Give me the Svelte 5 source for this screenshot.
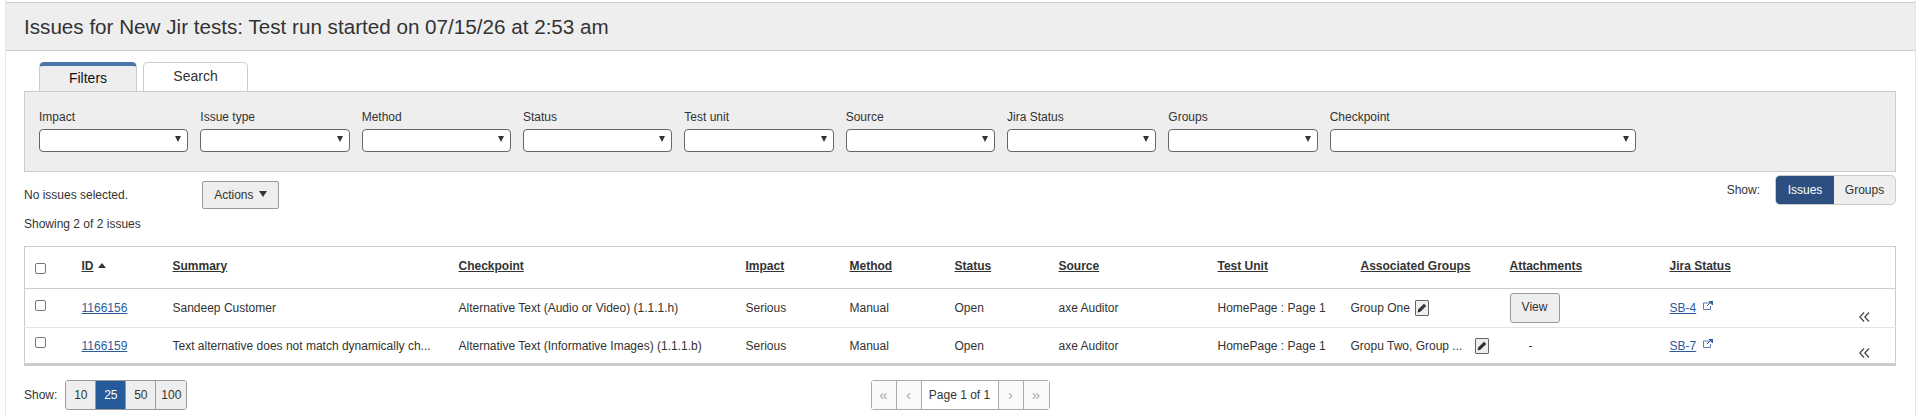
<script>
  const filters = ["Impact", "Issue type", "Method", "Status", "Test unit", "Source", "Jira Status", "Groups", "Checkpoint"];
  const columns = ["ID", "Summary", "Checkpoint", "Impact", "Method", "Status", "Source", "Test Unit", "Associated Groups", "Attachments", "Jira Status"];
  const widths = [47, 91, 286, 287, 104, 105, 104, 159, 133, 159, 160, 189];
  const issues = [
    {
      id: "1166156",
      summary: "Sandeep Customer",
      checkpoint: "Alternative Text (Audio or Video) (1.1.1.h)",
      groups: "Group One",
      wide: false,
      view: true,
      jira: "SB-4"
    },
    {
      id: "1166159",
      summary: "Text alternative does not match dynamically ch...",
      checkpoint: "Alternative Text (Informative Images) (1.1.1.b)",
      groups: "Gropu Two, Group ...",
      wide: true,
      view: false,
      jira: "SB-7"
    }
  ];
  const sizes = ["10", "25", "50", "100"];
</script>

<div class="page">
  <h1>Issues for New Jir tests: Test run started on 07/15/26 at 2:53 am</h1>

  <div class="content">
    <div class="tabs">
      <button class="tab active">Filters</button>
      <button class="tab">Search</button>
    </div>

    <div class="filters">
      {#each filters as name}
        <div class="field" class:long={name === "Checkpoint"}>
          <span class="label">{name}</span>
          <div class="select"><span class="arrow"></span></div>
        </div>
      {/each}
    </div>

    <div class="toolbar">
      <div class="selection">
        <span class="none">No issues selected.</span>
        <button class="actions">Actions <span class="arrow"></span></button>
      </div>
      <div class="show">
        <span>Show:</span>
        <div class="toggle">
          <button class="on">Issues</button>
          <button>Groups</button>
        </div>
      </div>
    </div>

    <p class="count">Showing 2 of 2 issues</p>

    <table>
      <colgroup>
        {#each widths as w}
          <col style="width: {w}px" />
        {/each}
        <col />
      </colgroup>
      <thead>
        <tr>
          <th><span class="box head"></span></th>
          {#each columns as col}
            <th class:assoc={col === "Associated Groups"}>
              <u>{col}</u>{#if col === "ID"}<span class="sort"></span>{/if}
            </th>
          {/each}
          <th></th>
        </tr>
      </thead>
      <tbody>
        {#each issues as issue}
          <tr>
            <td><span class="box"></span></td>
            <td><a href="#top">{issue.id}</a></td>
            <td>{issue.summary}</td>
            <td>{issue.checkpoint}</td>
            <td>Serious</td>
            <td>Manual</td>
            <td>Open</td>
            <td>axe Auditor</td>
            <td>HomePage : Page 1</td>
            <td>
              <div class="groups" class:wide={issue.wide}>
                <span class="names">{issue.groups}</span>
                <button class="edit" aria-label="Edit groups">
                  <svg width="10" height="10" viewBox="0 0 10 10">
                    <path d="M7 .8 9.2 3 3.4 8.8.6 9.4 1.2 6.6Z" fill="#333" />
                  </svg>
                </button>
              </div>
            </td>
            <td class="attach">
              {#if issue.view}
                <button class="view">View</button>
              {:else}
                <span class="dash">-</span>
              {/if}
            </td>
            <td>
              <a href="#top">{issue.jira}</a>
              <svg class="ext" width="10" height="9" viewBox="0 0 10 9">
                <path d="M6.5 2H.5v6.500h7V5" fill="none" stroke="#5b7fae" />
                <path d="M4 5 7.500 1.500M6 .3h3.700V4Z" fill="#2a5c9e" stroke="#2a5c9e" />
              </svg>
            </td>
            <td class="more">
              <svg width="11" height="10" viewBox="0 0 11 10">
                <path d="M5 .5.800 5 5 9.500M10 .5 5.800 5 10 9.500" fill="none" stroke="#444" stroke-width="1.200" />
              </svg>
            </td>
          </tr>
        {/each}
      </tbody>
    </table>

    <div class="footer">
      <div class="sizes">
        <span>Show:</span>
        <div class="size-group">
          {#each sizes as size}
            <button class:on={size === "25"}>{size}</button>
          {/each}
        </div>
      </div>

      <div class="pager">
        <button aria-label="First page">«</button>
        <button aria-label="Previous page">‹</button>
        <span>Page 1 of 1</span>
        <button aria-label="Next page">›</button>
        <button aria-label="Last page">»</button>
      </div>
    </div>
  </div>
</div>

<style>
  :global(body) {
    background: #fff;
    color: #333;
    font-family: "Liberation Sans", Arial, sans-serif;
    font-size: 12px;
  }

  .page {
    box-sizing: border-box;
    height: 417px;
    margin-left: 5px;
    padding-top: 2px;
    border-left: 1px solid #e6e6e6;
    border-right: 1px solid #e6e6e6;
  }

  button {
    font-family: inherit;
    color: inherit;
    cursor: pointer;
  }

  h1 {
    box-sizing: border-box;
    height: 49px;
    margin: 0;
    padding-left: 18px;
    background: #eee;
    border-top: 1px solid #ccc;
    border-bottom: 1px solid #ccc;
    font-size: 20.65px;
    font-weight: normal;
    line-height: 47px;
  }

  .content {
    padding: 11px 19px 0 18px;
  }

  .tabs {
    display: flex;
    gap: 6px;
    height: 29px;
    padding-left: 15px;
  }

  .tab {
    box-sizing: border-box;
    width: 105px;
    height: 29px;
    padding: 0 0 3px;
    background: #fff;
    border: 1px solid #ccc;
    border-bottom: none;
    border-radius: 5px 5px 0 0;
    font-size: 14px;
  }

  .tab.active {
    width: 98px;
    padding: 0 0 2px;
    background: #eee;
    border-top: 4px solid #4a76a8;
    color: #111;
  }

  .filters {
    box-sizing: border-box;
    display: flex;
    gap: 12px;
    height: 81px;
    padding: 17px 14px 0;
    background: #eee;
    border: 1px solid #ccc;
  }

  .field {
    display: flex;
    flex-direction: column;
    width: 149.33px;
  }

  .field.long {
    width: 306px;
  }

  .label {
    height: 20px;
    line-height: 16px;
  }

  .select {
    box-sizing: border-box;
    position: relative;
    height: 23px;
    background: #fff;
    border: 1px solid #666;
    border-radius: 4px;
  }

  .arrow {
    display: inline-block;
    border-left: 3.500px solid transparent;
    border-right: 3.500px solid transparent;
    border-top: 6px solid #333;
  }

  .select .arrow {
    position: absolute;
    top: 6px;
    right: 6px;
  }

  .toolbar {
    display: flex;
    justify-content: space-between;
    align-items: flex-start;
    height: 38px;
    padding-top: 3px;
    box-sizing: border-box;
  }

  .selection {
    display: flex;
    align-items: center;
    padding-top: 6px;
  }

  .none {
    width: 178px;
  }

  .actions {
    box-sizing: border-box;
    width: 77px;
    height: 28px;
    padding: 0;
    background: #eee;
    border: 1px solid #999;
    border-radius: 2px;
    font-size: 12px;
  }

  .actions .arrow {
    margin-left: 2px;
    vertical-align: 2px;
    border-left-width: 4px;
    border-right-width: 4px;
  }

  .show {
    display: flex;
    align-items: center;
    gap: 15px;
  }

  .toggle {
    display: flex;
    box-sizing: border-box;
    height: 30px;
    background: #eee;
    border: 1px solid #ccc;
    border-radius: 5px;
    overflow: hidden;
  }

  .toggle button {
    width: 61px;
    padding: 0;
    background: none;
    border: none;
    font-size: 12px;
  }

  .toggle .on {
    width: 58px;
    background: #2c4f7f;
    color: #fff;
    font-weight: normal;
  }

  .count {
    height: 25px;
    margin: 0 0 11px;
    line-height: 28px;
  }

  table {
    width: 100%;
    table-layout: fixed;
    border-collapse: collapse;
    border: 1px solid #ccc;
    border-bottom: 3px solid #ccc;
  }

  th {
    height: 37px;
    padding: 0 0 4px 10px;
    border-bottom: 1px solid #ccc;
    text-align: left;
    font-weight: bold;
    white-space: nowrap;
  }

  th.assoc {
    padding-left: 20px;
  }

  td {
    height: 33px;
    padding: 0 0 0 10px;
    border-bottom: 1px solid #e4e4e4;
    white-space: nowrap;
    overflow: hidden;
  }

  tbody tr:last-child td {
    border-bottom: none;
  }

  tbody tr:first-child td {
    height: 36px;
  }

  a {
    color: #2a5c9e;
  }

  .box {
    display: block;
    box-sizing: border-box;
    width: 11px;
    height: 11px;
    position: relative;
    top: -3px;
    background: #fff;
    border: 1px solid #767676;
    border-radius: 2px;
  }

  .box.head {
    top: 3px;
  }

  .sort {
    display: inline-block;
    margin-left: 4px;
    vertical-align: 2px;
    border-left: 4px solid transparent;
    border-right: 4px solid transparent;
    border-bottom: 5px solid #333;
  }

  .groups {
    display: flex;
    align-items: center;
    gap: 5px;
  }

  .groups.wide .names {
    width: 114px;
    flex: none;
  }

  .groups.wide {
    gap: 10px;
  }

  .edit {
    display: flex;
    align-items: center;
    justify-content: center;
    flex: none;
    box-sizing: border-box;
    width: 14px;
    height: 16px;
    padding: 0;
    background: #eee;
    border: 1px solid #666;
    border-radius: 1px;
  }

  .attach {
    padding-left: 10px;
  }

  .view {
    display: block;
    box-sizing: border-box;
    width: 50px;
    height: 30px;
    padding: 0 0 3px;
    background: #eee;
    border: 1px solid #999;
    border-radius: 3px;
    font-size: 12px;
  }

  .dash {
    margin-left: 19px;
  }

  .ext {
    margin-left: 3px;
    vertical-align: 2px;
  }

  .more {
    vertical-align: bottom;
    padding-bottom: 2px;
    overflow: visible;
  }

  .footer {
    display: grid;
    grid-template-columns: 1fr auto 1fr;
    margin-top: 14px;
  }

  .sizes {
    display: flex;
    align-items: center;
    gap: 8px;
  }

  .size-group {
    display: flex;
    height: 30px;
    box-sizing: border-box;
    border: 1px solid #999;
    border-radius: 3px;
    overflow: hidden;
  }

  .size-group button {
    width: 30px;
    padding: 0;
    background: #eee;
    border: none;
    border-right: 1px solid #999;
    font-size: 12px;
  }

  .size-group button:last-child {
    border-right: none;
  }

  .size-group .on {
    background: #255a9b;
    color: #fff;
  }

  .pager {
    display: flex;
    box-sizing: border-box;
    height: 30px;
    border: 1px solid #aaa;
    border-radius: 3px;
  }

  .pager button {
    width: 25px;
    padding: 0 0 2px;
    background: #fafafa;
    border: none;
    border-right: 1px solid #aaa;
    color: #aaa;
    font-size: 15px;
  }

  .pager button:last-child {
    border-right: none;
  }

  .pager span {
    width: 76px;
    border-right: 1px solid #aaa;
    text-align: center;
    line-height: 28px;
  }
</style>
